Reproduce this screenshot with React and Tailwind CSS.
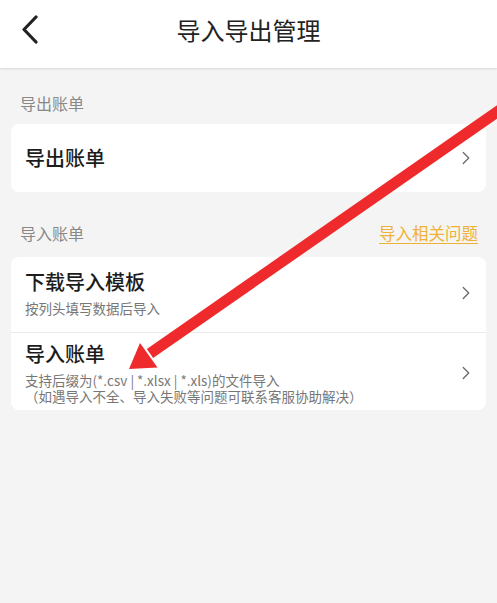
import { ChevronRight } from "lucide-react";

const FONT = { fontFamily: '"Noto Sans CJK SC", "Noto Sans", sans-serif' };

function Row({ title, lines, className = "" }) {
  return (
    <div className={`flex items-center justify-between pl-[14px] pr-[9px] ${className}`}>
      <div className="flex flex-col">
        <p className="text-[20px] leading-[24px] font-medium text-[#1c1c1c]">{title}</p>
        {lines && (
          <div className="mt-[6px] flex flex-col">
            {lines.map((line) => (
              <p key={line} className="text-[13.5px] leading-[16px] text-[#777]">
                {line}
              </p>
            ))}
          </div>
        )}
      </div>
      <ChevronRight size={22} strokeWidth={1.3} className="text-[#666]" />
    </div>
  );
}

export default function App() {
  return (
    <div className="relative h-[603px] w-[497px] overflow-hidden bg-[#f4f4f4]" style={FONT}>
      <header className="relative flex h-[68px] items-center justify-center bg-white shadow-[0_1px_2px_rgba(0,0,0,0.12)]">
        <svg
          className="absolute left-[20px] top-[15px]"
          width="20"
          height="29"
          viewBox="0 0 20 29"
          fill="none"
        >
          <path
            d="M16 2 L4 14.5 L16 27"
            stroke="#222"
            strokeWidth="3.2"
            strokeLinecap="round"
            strokeLinejoin="round"
          />
        </svg>
        <h1 className="text-[24px] leading-[30px] text-[#222] -mt-[8px]">导入导出管理</h1>
      </header>

      <p className="px-[20px] pt-[23px] pb-[9px] text-[16px] leading-[24px] text-[#888]">导出账单</p>
      <div className="mx-[11px] rounded-[8px] bg-white">
        <Row title="导出账单" className="h-[68px]" />
      </div>

      <div className="flex items-center justify-between pl-[20px] pr-[19px] pt-[29px] pb-[12px]">
        <p className="text-[16px] leading-[24px] text-[#888]">导入账单</p>
        <p className="text-[16.5px] leading-[24px] text-[#f0b234] underline underline-offset-[3px]">
          导入相关问题
        </p>
      </div>
      <div className="mx-[11px] rounded-[8px] bg-white">
        <Row
          title="下载导入模板"
          lines={["按列头填写数据后导入"]}
          className="pt-[13px] pb-[16px] border-b border-[#ebebeb]"
        />
        <Row
          title="导入账单"
          lines={[
            "支持后缀为(*.csv | *.xlsx | *.xls)的文件导入",
            "（如遇导入不全、导入失败等问题可联系客服协助解决）",
          ]}
          className="pt-[9px] pb-[6px]"
        />
      </div>

      <svg
        className="pointer-events-none absolute inset-0"
        width="497"
        height="603"
        viewBox="0 0 497 603"
      >
        <line x1="510" y1="103" x2="150" y2="353.5" stroke="#ef2a2c" strokeWidth="11" />
        <polygon points="129,369 140,343 157.5,367.5" fill="#ef2a2c" />
      </svg>
    </div>
  );
}
